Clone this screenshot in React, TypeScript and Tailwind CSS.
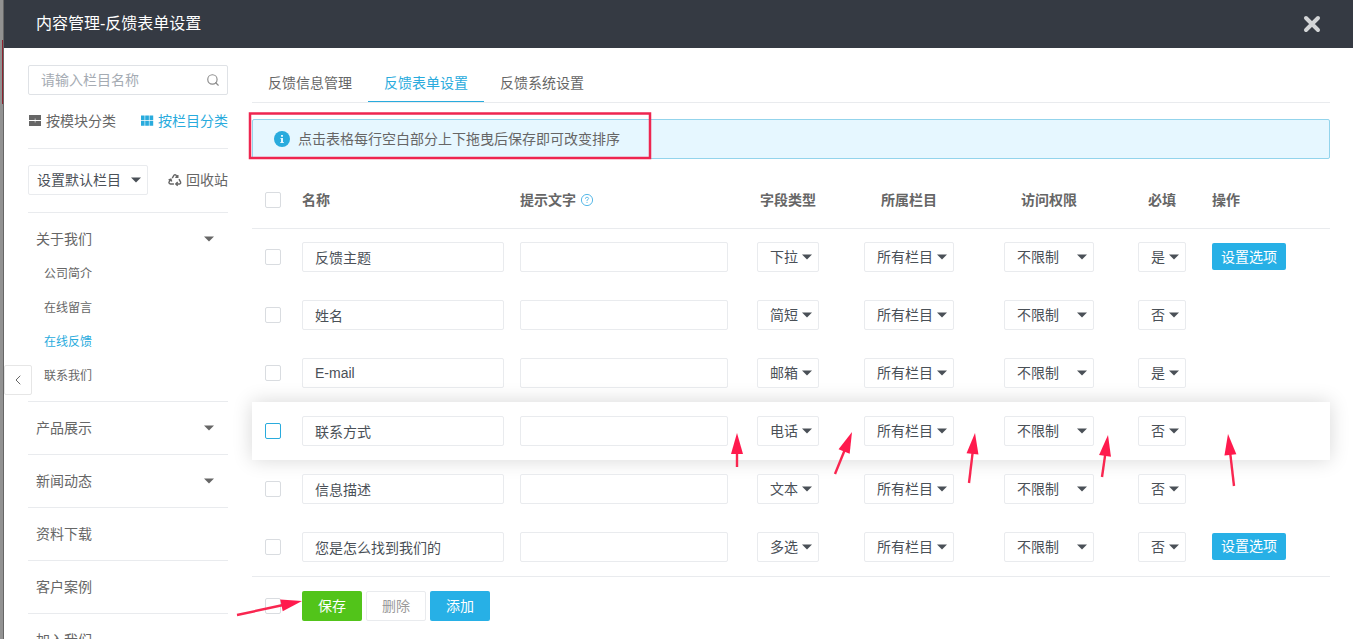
import { ChevronLeft, Search } from "lucide-react";
import clsx from "clsx";

const aboutItems = ["公司简介", "在线留言", "在线反馈", "联系我们"];

const columns = [
  { label: "产品展示", open: true },
  { label: "新闻动态", open: true },
  { label: "资料下载", open: false },
  { label: "客户案例", open: false },
  { label: "加入我们", open: false },
];

const tabs = ["反馈信息管理", "反馈表单设置", "反馈系统设置"];

const fields = [
  { name: "反馈主题", type: "下拉", required: "是", options: true },
  { name: "姓名", type: "简短", required: "否", options: false },
  { name: "E-mail", type: "邮箱", required: "是", options: false },
  { name: "联系方式", type: "电话", required: "否", options: false },
  { name: "信息描述", type: "文本", required: "否", options: false },
  { name: "您是怎么找到我们的", type: "多选", required: "否", options: true },
];

const fieldTypes = ["下拉", "简短", "邮箱", "电话", "文本", "多选"];

const activeField = "联系方式";

const arrows = [
  { from: [737, 467], to: [737, 433] },
  { from: [835, 474], to: [852, 432] },
  { from: [969, 483], to: [975, 433] },
  { from: [1102, 477], to: [1108, 435] },
  { from: [1234, 486], to: [1228, 434] },
  { from: [237, 615], to: [302, 601] },
];

const Caret = ({ className }: { className?: string }) => (
  <svg viewBox="0 0 10 6" className={clsx("h-1.5 w-2.5 shrink-0", className)}>
    <path d="M0 0.5h10L5 5.5z" fill="currentColor" />
  </svg>
);

type SelectProps = {
  label: string;
  value: string;
  options: string[];
  className: string;
};

const Select = ({ label, value, options, className }: SelectProps) => (
  <div className={clsx("relative inline-block align-middle text-[#4a5057]", className)}>
    <select
      aria-label={label}
      defaultValue={value}
      className="block h-[30px] w-full appearance-none rounded-xs border border-[#e9ebee] bg-white pl-3 text-left outline-none"
    >
      {options.map((option) => (
        <option key={option}>{option}</option>
      ))}
    </select>
    <Caret className="pointer-events-none absolute top-3 right-[7px]" />
  </div>
);

const Checkbox = ({ label, active }: { label: string; active?: boolean }) => (
  <input
    type="checkbox"
    aria-label={label}
    className={clsx(
      "block size-4 appearance-none rounded-xs border bg-white",
      active ? "border-[#29abdd]" : "border-[#d9dce0]"
    )}
  />
);

const ModuleIcon = () => (
  <svg viewBox="0 0 14 12" className="h-3 w-3.5" fill="currentColor">
    <path d="M1 0h5.8v5H1zM7.400 0H13v5H7.400zM1 6h5.800v5H1zM7.400 6H13v5H7.400z" />
    <path d="M5 0h4v3.400H5zM5 7.500h4V11H5z" />
  </svg>
);

const CategoryIcon = () => (
  <svg viewBox="0 0 14 12" className="h-3 w-3.5" fill="currentColor">
    <path d="M1 .5h3.600v4.800H1zM5.200.5h3.700v4.800H5.200zM9.500.5h3.700v4.800H9.500zM1 6h3.600v4.800H1zM5.200 6h3.700v4.800H5.200zM9.500 6h3.700v4.800H9.500z" />
  </svg>
);

const RecycleIcon = () => (
  <svg
    viewBox="0 0 14 14"
    className="size-3.5"
    fill="none"
    stroke="currentColor"
    strokeWidth="1.4"
  >
    <path d="M4.3 5.2 6 2.2q1-1.2 2 0l1 1.7M9.8 2v2.4H7.3" />
    <path d="M11 6.2l1.6 2.9q.4 1.6-1.1 1.9H8.2M9.7 9.1 7.8 11l1.9 1.8" />
    <path d="M5.9 11H2.5Q1 10.7.9 9.500L2.600 6.300M.6 6.900 2.900 6.100 3.700 8.400" />
  </svg>
);

const Header = () => (
  <header className="flex h-12 items-center justify-between bg-[#353a43] pr-8 pl-8 text-white">
    <h1 className="text-base leading-6">内容管理-反馈表单设置</h1>
    <button type="button" aria-label="关闭" className="text-[#d3d5d7]">
      <svg viewBox="0 0 18 18" className="size-[18px]" stroke="currentColor" strokeWidth="4" strokeLinecap="round">
        <path d="M3 3l12 12M15 3 3 15" />
      </svg>
    </button>
  </header>
);

const Sidebar = () => (
  <aside className="w-[200px] shrink-0 pt-[17px]">
    <div className="flex h-[30px] items-center rounded-xs border border-[#dfe2e6] pr-[7px] pl-3">
      <input
        type="text"
        aria-label="栏目名称"
        placeholder="请输入栏目名称"
        className="min-w-0 flex-1 outline-none placeholder:text-[#a5abb3]"
      />
      <Search size={14} color="#8c8c8c" strokeWidth={2} />
    </div>
    <div className="mt-4 flex h-5 items-center justify-between">
      <a href="#module" className="flex items-center gap-1">
        <ModuleIcon />
        按模块分类
      </a>
      <a href="#column" className="flex items-center gap-1 text-[#29abdd]">
        <CategoryIcon />
        按栏目分类
      </a>
    </div>
    <div className="mt-[17px] flex items-center justify-between border-t border-[#e9ebee] py-4">
      <div className="relative w-[120px] text-[#4a5057]">
        <select
          aria-label="默认栏目"
          className="block h-[30px] w-full appearance-none rounded-xs border border-[#e9ebee] bg-white pl-2 outline-none"
        >
          <option>设置默认栏目</option>
        </select>
        <Caret className="pointer-events-none absolute top-3 right-[7px]" />
      </div>
      <a href="#recycle" className="flex items-center gap-1">
        <RecycleIcon />
        回收站
      </a>
    </div>
    <nav>
      <div className="mt-px border-t border-[#e9ebee] pb-2">
        <a href="#about" className="flex h-11 items-center justify-between pt-2 pr-3.5 pl-2">
          关于我们
          <Caret />
        </a>
        <ul className="text-xs">
          {aboutItems.map((item) => (
            <li key={item}>
              <a
                href={`#${item}`}
                className={clsx("flex h-[34px] items-center pl-4", item === "在线反馈" && "text-[#29abdd]")}
              >
                {item}
              </a>
            </li>
          ))}
        </ul>
      </div>
      {columns.map((column) => (
        <a
          key={column.label}
          href={`#${column.label}`}
          className="flex h-[53px] items-center justify-between border-t border-[#e9ebee] pr-3.5 pl-2"
        >
          {column.label}
          {column.open && <Caret />}
        </a>
      ))}
    </nav>
  </aside>
);

const FieldTable = () => (
  <table className="mt-3.5 w-full table-fixed border-collapse">
    <colgroup>
      <col className="w-[42px]" />
      <col className="w-[218px]" />
      <col className="w-[224px]" />
      <col className="w-[104px]" />
      <col className="w-[138px]" />
      <col className="w-[142px]" />
      <col className="w-[84px]" />
      <col />
    </colgroup>
    <thead>
      <tr className="h-[55px] border-b border-[#e9ebee] text-left">
        <th className="pl-[13px]">
          <Checkbox label="全选" />
        </th>
        <th className="px-2">名称</th>
        <th className="px-2">
          <div className="flex items-center gap-1">
            提示文字
            <svg viewBox="0 0 14 14" className="size-3.5 text-[#58b9e8]" fill="none" stroke="currentColor">
              <circle cx="7" cy="7" r="5.6" />
              <path d="M5.4 5.8q0-1.6 1.600-1.600t1.600 1.400q0 .8-1.600 1.600v.9M7 9v1" strokeWidth=".9" />
            </svg>
          </div>
        </th>
        <th className="text-center">字段类型</th>
        <th className="text-center">所属栏目</th>
        <th className="text-center">访问权限</th>
        <th className="text-center">必填</th>
        <th className="px-2">操作</th>
      </tr>
    </thead>
    <tbody className="border-b border-[#e9ebee]">
      {fields.map((field) => {
        const active = field.name === activeField;
        return (
          <tr
            key={field.name}
            className={clsx("h-[58px]", active && "shadow-[0_0_20px_rgba(0,0,0,0.16)]")}
          >
            <td className="pl-[13px]">
              <Checkbox label={field.name} active={active} />
            </td>
            <td className="px-2">
              <input
                type="text"
                aria-label="名称"
                defaultValue={field.name}
                className="block h-[30px] w-full rounded-xs border border-[#e9ebee] bg-white px-3 text-[#4a5057] outline-none"
              />
            </td>
            <td className="px-2">
              <input
                type="text"
                aria-label="提示文字"
                className="block h-[30px] w-full rounded-xs border border-[#e9ebee] bg-white px-3 outline-none"
              />
            </td>
            <td className="text-center">
              <Select label="字段类型" value={field.type} options={fieldTypes} className="w-[62px]" />
            </td>
            <td className="text-center">
              <Select label="所属栏目" value="所有栏目" options={["所有栏目"]} className="w-[90px]" />
            </td>
            <td className="text-center">
              <Select label="访问权限" value="不限制" options={["不限制"]} className="w-[90px]" />
            </td>
            <td className="text-center">
              <Select label="必填" value={field.required} options={["是", "否"]} className="w-12" />
            </td>
            <td className="px-2 pb-px">
              {field.options && (
                <button type="button" className="block h-[27px] rounded-xs bg-[#27b0e6] px-[9px] text-white">
                  设置选项
                </button>
              )}
            </td>
          </tr>
        );
      })}
    </tbody>
  </table>
);

const Annotations = () => (
  <svg className="pointer-events-none absolute inset-0 size-full" fill="none">
    <rect x="250" y="113.5" width="400" height="44.5" stroke="#ee2650" strokeWidth="2.5" />
    {arrows.map(({ from, to }) => {
      const length = Math.hypot(to[0] - from[0], to[1] - from[1]);
      const angle = (Math.atan2(to[1] - from[1], to[0] - from[0]) * 180) / Math.PI;
      return (
        <g key={from[0]} transform={`translate(${from[0]} ${from[1]}) rotate(${angle})`}>
          <path d={`M0 0H${length - 18}`} stroke="#f92650" strokeWidth="2.4" />
          <path d={`M${length} 0l-21-6v12z`} fill="#ff1a4d" />
        </g>
      );
    })}
  </svg>
);

const App = () => {
  return (
    <div className="relative flex h-screen overflow-hidden bg-white font-['Liberation_Sans','Noto_Sans_CJK_SC',sans-serif] text-sm text-[#666]">
      <div className="flex w-1 shrink-0 flex-col border-r border-[#666] bg-[#929292]">
        <div className="mt-10 h-16 border-r border-[#8e2430]" />
      </div>
      <div className="min-w-0 flex-1">
        <Header />
        <div className="flex gap-6 pr-[23px] pl-6">
          <Sidebar />
          <main className="min-w-0 flex-1 pt-[17px]">
            <div className="flex h-[38px] border-b border-[#e9ebee]">
              {tabs.map((tab) => (
                <button
                  key={tab}
                  type="button"
                  className={clsx(
                    "h-[37px] border-b px-4",
                    tab === "反馈表单设置" ? "border-[#29abdd] text-[#29abdd]" : "border-transparent"
                  )}
                >
                  {tab}
                </button>
              ))}
            </div>
            <div className="mt-4 flex h-10 items-center gap-2 rounded-xs border border-[#93d4ec] bg-[#e6f7ff] pl-[21px]">
              <svg viewBox="0 0 16 16" className="size-4">
                <circle cx="8" cy="8" r="8" fill="#29abdd" />
                <path d="M7 4h2v1.7H7zM6.5 7H9v4h.8v1H6.3v-1H7V8h-.5z" fill="#e6f7ff" />
              </svg>
              点击表格每行空白部分上下拖曳后保存即可改变排序
            </div>
            <FieldTable />
            <div className="mt-3.5 flex items-center gap-1 pl-[13px]">
              <div className="w-[33px]">
                <Checkbox label="全选" />
              </div>
              <button type="button" className="h-[30px] w-15 rounded-xs bg-[#52c41a] text-white">
                保存
              </button>
              <button type="button" className="h-[30px] w-15 rounded-xs border border-[#e9ebee] text-[#9a9a9a]">
                删除
              </button>
              <button type="button" className="h-[30px] w-15 rounded-xs bg-[#27b0e6] text-white">
                添加
              </button>
            </div>
          </main>
        </div>
      </div>
      <button
        type="button"
        aria-label="收起"
        className="absolute top-[365px] left-1 flex h-[30px] w-7 items-center justify-center rounded-xs border border-[#e6e6e6] bg-white"
      >
        <ChevronLeft size={16} strokeWidth={1.5} />
      </button>
      <Annotations />
    </div>
  );
};

export default App;
